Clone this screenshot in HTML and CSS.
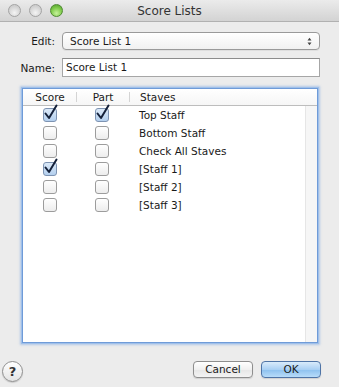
FILE: index.html
```html
<!DOCTYPE html>
<html lang="en">
<head>
  <meta charset="UTF-8">
  <link rel="stylesheet" href="styles.css">
  <title>Score Lists</title>
</head>
<body>
  <div class="window">
    <div class="title_bar">
      <div class="lights">
        <span class="light"></span>
        <span class="light"></span>
        <span class="light light_green"></span>
      </div>
      <p class="window_title">Score Lists</p>
      <div></div>
    </div>

    <div class="form_row edit_row">
      <label class="form_label">Edit:</label>
      <div class="popup">
        <span>Score List 1</span>
        <svg class="stepper" width="5" height="9" viewBox="0 0 5 9">
          <path d="M0.5 3.5 L2.5 0.8 L4.5 3.5 Z M0.5 5.5 L2.5 8.2 L4.5 5.5 Z" fill="#444"/>
        </svg>
      </div>
    </div>

    <div class="form_row name_row">
      <label class="form_label">Name:</label>
      <div class="text_field">Score List 1</div>
    </div>

    <div class="list_frame">
      <div class="list_header">
        <div class="col_score">Score</div>
        <div class="col_part">Part</div>
        <div class="col_staves">Staves</div>
        <div class="col_scroll"></div>
      </div>
      <div class="list_body">
        <div class="rows">
          <div class="row">
            <div class="col_score"><span class="check checked"><svg class="tick" width="18" height="18" viewBox="0 0 18 18"><path d="M3.5 9.5 L7 14 L14.5 1.5" /></svg></span></div>
            <div class="col_part"><span class="check checked"><svg class="tick" width="18" height="18" viewBox="0 0 18 18"><path d="M3.5 9.5 L7 14 L14.5 1.5" /></svg></span></div>
            <div class="col_staves">Top Staff</div>
          </div>
          <div class="row">
            <div class="col_score"><span class="check"></span></div>
            <div class="col_part"><span class="check"></span></div>
            <div class="col_staves">Bottom Staff</div>
          </div>
          <div class="row">
            <div class="col_score"><span class="check"></span></div>
            <div class="col_part"><span class="check"></span></div>
            <div class="col_staves">Check All Staves</div>
          </div>
          <div class="row">
            <div class="col_score"><span class="check checked"><svg class="tick" width="18" height="18" viewBox="0 0 18 18"><path d="M3.5 9.5 L7 14 L14.5 1.5" /></svg></span></div>
            <div class="col_part"><span class="check"></span></div>
            <div class="col_staves">[Staff 1]</div>
          </div>
          <div class="row">
            <div class="col_score"><span class="check"></span></div>
            <div class="col_part"><span class="check"></span></div>
            <div class="col_staves">[Staff 2]</div>
          </div>
          <div class="row">
            <div class="col_score"><span class="check"></span></div>
            <div class="col_part"><span class="check"></span></div>
            <div class="col_staves">[Staff 3]</div>
          </div>
        </div>
        <div class="scroll_track"></div>
      </div>
    </div>

    <div class="footer">
      <button class="help_button">?</button>
      <div class="buttons">
        <button class="push_button">Cancel</button>
        <button class="push_button default_button">OK</button>
      </div>
    </div>
  </div>
</body>
</html>
```

FILE: styles.css
```css
/* Basics */
body {
  margin: 0;
  font-family: "DejaVu Sans", "Liberation Sans", sans-serif;
  font-size: 10.5px;
  color: #1a1a1a;
  background-color: #ececec;
}

p {
  margin: 0;
}

button {
  font-family: inherit;
  font-size: 10.5px;
  color: #1a1a1a;
  padding: 0;
}

.window {
  width: 339px;
  height: 387px;
  display: flex;
  flex-direction: column;
  background-color: #ececec;
  overflow: hidden;
}

/* Title Bar */
.title_bar {
  display: grid;
  grid-template-columns: 1fr auto 1fr;
  align-items: center;
  height: 22px;
  box-sizing: border-box;
  background: linear-gradient(#ebebeb, #d3d3d3);
  border-bottom: 1px solid #b1b1b1;
}

.lights {
  display: flex;
  gap: 8px;
  padding-left: 8px;
}

.light {
  width: 11px;
  height: 11px;
  border-radius: 50%;
  background: radial-gradient(circle at 50% 70%, #f4f4f4, #cfcfcf 70%);
  border: 1px solid #a3a3a3;
}

.light_green {
  background: radial-gradient(circle at 50% 75%, #c7f29c, #7fcb4b 55%, #4f9a2a);
  border-color: #4f8a33;
}

.window_title {
  font-size: 12px;
  color: #333;
}

/* Form */
.form_row {
  display: flex;
  align-items: center;
  gap: 7px;
}

.form_label {
  width: 55px;
  text-align: right;
}

.edit_row {
  margin-top: 10px;
}

.name_row {
  margin-top: 8px;
}

.popup {
  width: 258px;
  height: 18px;
  box-sizing: border-box;
  display: flex;
  align-items: center;
  justify-content: space-between;
  padding: 0 7px 0 7px;
  border: 1px solid #9a9a9a;
  border-radius: 4px;
  background: linear-gradient(#ffffff, #f1f1f1);
  box-shadow: 0 1px 0 rgba(0, 0, 0, 0.06);
}

.text_field {
  width: 258px;
  height: 19px;
  box-sizing: border-box;
  padding: 2px 3px;
  border: 1px solid #a6a6a6;
  border-top-color: #8c8c8c;
  background-color: #ffffff;
}

/* List */
.list_frame {
  margin: 11px 0 0 22px;
  width: 296px;
  height: 255px;
  box-sizing: border-box;
  display: flex;
  flex-direction: column;
  border: 1px solid #6f9bd8;
  box-shadow: 0 0 0 1px #9fc0ea, 0 0 2px 2px rgba(120, 165, 225, 0.5);
  background-color: #ffffff;
}

.list_header {
  display: flex;
  height: 16px;
  flex-shrink: 0;
  align-items: center;
  border-bottom: 1px solid #bdbdbd;
  background: linear-gradient(#ffffff, #f6f6f6);
}

.col_score, .col_part {
  width: 52px;
  text-align: center;
  display: flex;
  justify-content: center;
}

.col_score {
  margin-left: 1px;
}

.list_header .col_part, .list_header .col_staves {
  border-left: 1px solid #d4d4d4;
  height: 10px;
  line-height: 10px;
}

.col_staves {
  flex: 1;
  padding-left: 10px;
}

.col_scroll {
  width: 12px;
}

.list_body {
  flex: 1;
  display: flex;
}

.rows {
  flex: 1;
}

.row {
  display: flex;
  align-items: center;
  height: 18px;
}

.row .col_staves {
  padding-left: 11px;
}

.scroll_track {
  width: 11px;
  background-color: #f6f6f6;
  border-left: 1px solid #e6e6e6;
}

/* Checkboxes */
.check {
  position: relative;
  width: 14px;
  height: 14px;
  box-sizing: border-box;
  border: 1px solid #9c9c9c;
  border-radius: 3px;
  background: linear-gradient(#ffffff, #ededed);
}

.checked {
  border-color: #7d93b2;
  background: linear-gradient(#dbe9f8, #b3cfee);
}

.tick {
  position: absolute;
  left: -2px;
  top: -5px;
}

.tick path {
  fill: none;
  stroke: #14213a;
  stroke-width: 2;
  stroke-linecap: round;
  stroke-linejoin: round;
}

/* Footer */
.footer {
  display: flex;
  align-items: center;
  justify-content: space-between;
  margin-top: 18px;
  padding: 0 18px 0 2px;
}

.help_button {
  width: 21px;
  height: 21px;
  border-radius: 50%;
  border: 1px solid #8f8f8f;
  background: linear-gradient(#ffffff, #e4e4e4);
  font-size: 13px;
  font-weight: bold;
  color: #333;
  box-shadow: 0 1px 1px rgba(0, 0, 0, 0.15);
}

.buttons {
  display: flex;
  gap: 8px;
  margin-top: -5px;
}

.push_button {
  width: 60px;
  height: 17px;
  border: 1px solid #8e8e8e;
  border-radius: 4px;
  background: linear-gradient(#ffffff, #f0f0f0 50%, #e6e6e6 51%, #f3f3f3);
  box-shadow: 0 1px 1px rgba(0, 0, 0, 0.12);
}

.default_button {
  border-color: #4f74a6;
  background: linear-gradient(#d9ebfb, #a9d0f4 50%, #8cc0ee 51%, #b8dcf9);
}
```
